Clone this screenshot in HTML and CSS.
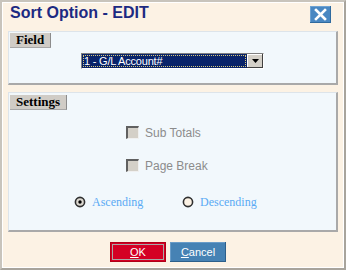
FILE: index.html
```html
<!DOCTYPE html>
<html lang="en">
<head>
<meta charset="UTF-8">
<meta name="viewport" content="width=device-width, initial-scale=1.0">
<title>Sort Option - EDIT</title>
<link rel="stylesheet" href="styles.css">
</head>
<body>

<div class="dialog">
  <div class="titlebar">
    <span class="title">Sort Option - EDIT</span>
    <button class="close" title="Close">
      <svg width="21" height="17" viewBox="0 0 21 17">
        <path d="M6 4 L15 13 M15 4 L6 13" stroke="#fff" stroke-width="2.6" stroke-linecap="square"/>
      </svg>
    </button>
  </div>

  <div class="panel field-panel">
    <div class="legend">Field</div>
    <div class="select">
      <span class="select-value"><span class="focus">1 - G/L Account#</span></span>
      <span class="select-arrow">
        <svg width="7" height="4" viewBox="0 0 7 4"><path d="M0 0 H7 L3.5 4 Z" fill="#000"/></svg>
      </span>
    </div>
  </div>

  <div class="panel settings-panel">
    <div class="legend">Settings</div>
    <div class="check-row first">
      <span class="checkbox"></span>
      <span class="check-label">Sub Totals</span>
    </div>
    <div class="check-row">
      <span class="checkbox"></span>
      <span class="check-label">Page Break</span>
    </div>
    <div class="radio-row">
      <span class="radio-item">
        <svg width="12" height="12" viewBox="0 0 12 12">
          <circle cx="6" cy="6" r="4.6" fill="#dcd8d0" stroke="#303030" stroke-width="1.6"/>
          <circle cx="6" cy="6" r="1.7" fill="#000"/>
        </svg>
        <span class="radio-label">Ascending</span>
      </span>
      <span class="radio-item">
        <svg width="12" height="12" viewBox="0 0 12 12">
          <circle cx="6" cy="6" r="4.6" fill="#fcf2e4" stroke="#303030" stroke-width="1.6"/>
        </svg>
        <span class="radio-label">Descending</span>
      </span>
    </div>
  </div>

  <div class="buttons">
    <button class="btn btn-ok"><span class="inner"><u>O</u>K</span></button>
    <button class="btn btn-cancel"><u>C</u>ancel</button>
  </div>
</div>

</body>
</html>
```

FILE: styles.css
```css
body {
  margin: 0;
  font-family: "Liberation Sans", Arial, sans-serif;
}
.dialog {
  width: 346px;
  height: 270px;
  box-sizing: border-box;
  background-color: #fcf2e4;
  border: 2px solid #c8c4bc;
  border-right-color: #a8a49c;
  border-bottom-color: #a8a49c;
  box-shadow: inset 1px 1px 0 #fff, inset -1px -1px 0 #fff;
}
.titlebar {
  height: 29px;
  display: flex;
  justify-content: space-between;
  align-items: flex-start;
  padding: 0 13px 0 8px;
}
.title {
  font-size: 16px;
  line-height: 19px;
  font-weight: bold;
  color: #1c2a82;
  margin-top: 1px;
}
.close {
  width: 21px;
  height: 17px;
  margin-top: 4px;
  padding: 0;
  border: none;
  background-color: #4a88c2;
  box-shadow: inset -1px -1px 0 #2f6a9e, inset 1px 1px 0 #6ea2d2;
}
.close svg {
  display: block;
}
.panel {
  margin-left: 6px;
  width: 330px;
  box-sizing: border-box;
  background-color: #f2f8fc;
  border-left: 1px solid #dde4ea;
  border-top: 1px solid #dde4ea;
  border-right: 2px solid #a9a9a9;
  border-bottom: 2px solid #a9a9a9;
}
.field-panel {
  height: 54px;
}
.settings-panel {
  height: 140px;
  margin-top: 7px;
}
.legend {
  display: table;
  height: 14px;
  margin: 1px 0 0 1px;
  padding: 0 6px;
  background-color: #d0ccc6;
  border-right: 1px solid #8c8c8c;
  border-bottom: 1px solid #a8a8a8;
  font-family: "Liberation Serif", "Times New Roman", serif;
  font-weight: bold;
  font-size: 13px;
  line-height: 14px;
  color: #000;
}
.settings-panel .legend {
  margin-top: 2px;
}
.select {
  display: flex;
  width: 183px;
  height: 16px;
  box-sizing: border-box;
  margin: 5px 0 0 72px;
  border: 1px solid;
  border-color: #808080 #fff #fff #808080;
  background-color: #fff;
}
.select-value {
  flex: 1;
  background-color: #0a246a;
  padding: 1px;
  display: flex;
}
.focus {
  flex: 1;
  border: 1px dotted #d8c878;
  color: #fff;
  font-size: 11px;
  line-height: 11px;
  letter-spacing: -0.2px;
}
.select-arrow {
  width: 16px;
  background-color: #d4d0c8;
  box-shadow: inset -1px -1px 0 #404040, inset 1px 1px 0 #fff;
  display: flex;
  align-items: center;
  justify-content: center;
}
.check-row {
  display: flex;
  align-items: center;
  height: 13px;
  margin: 20px 0 0 117px;
}
.check-row.first {
  margin-top: 16px;
}
.checkbox {
  width: 13px;
  height: 13px;
  box-sizing: border-box;
  background-color: #d4d0c8;
  border-top: 2px solid #606060;
  border-left: 2px solid #606060;
  border-right: 1px solid #f0f0f0;
  border-bottom: 1px solid #f0f0f0;
}
.check-label {
  margin-left: 6px;
  font-size: 12px;
  color: #8c8c8c;
}
.radio-row {
  display: flex;
  margin: 24px 0 0 65px;
  height: 12px;
  align-items: center;
}
.radio-item {
  display: flex;
  align-items: center;
  width: 108px;
}
.radio-label {
  margin-left: 6px;
  font-family: "Liberation Serif", "Times New Roman", serif;
  font-size: 12px;
  color: #5aaaf4;
}
.buttons {
  display: flex;
  gap: 4px;
  margin: 10px 0 0 108px;
}
.btn {
  width: 56px;
  height: 20px;
  padding: 0;
  border: none;
  color: #fff;
  font-family: "Liberation Sans", Arial, sans-serif;
  font-size: 11px;
}
.btn-ok {
  background-color: #d40024;
  padding: 2px;
  box-shadow: inset 0 0 0 1px #b00018;
}
.btn-ok .inner {
  display: flex;
  align-items: center;
  justify-content: center;
  height: 100%;
  box-sizing: border-box;
  border: 1px solid #a8a8a8;
}
.btn-cancel {
  background-color: #4682b4;
  box-shadow: inset -1px -1px 0 #2c5f8a, inset 1px 1px 0 #6a9cc8;
}
```
